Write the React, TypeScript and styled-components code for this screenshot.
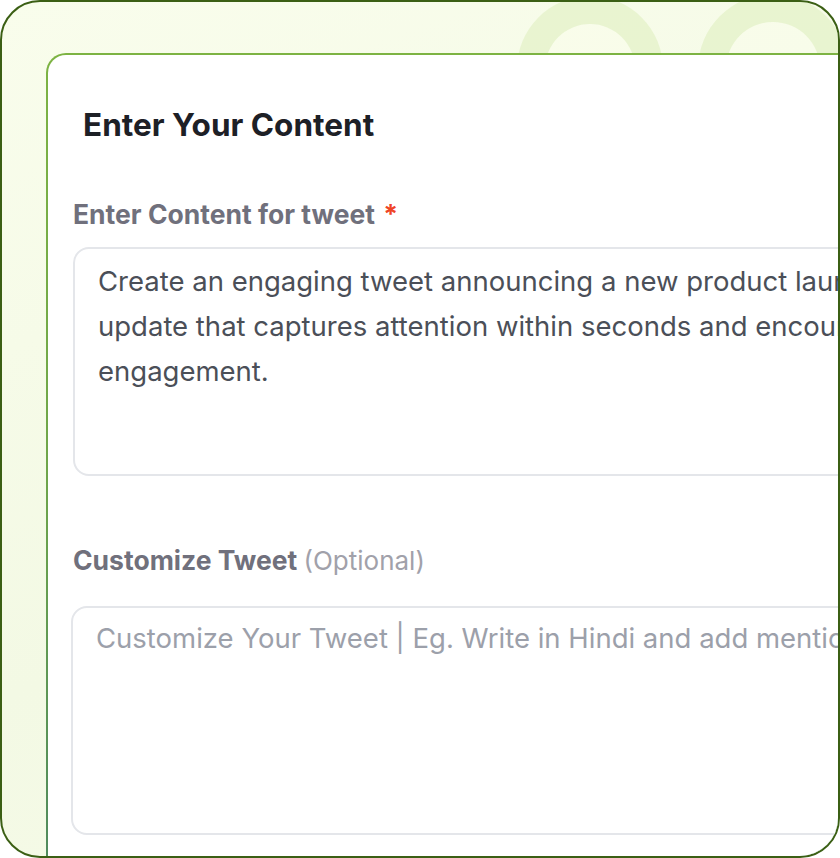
import React from 'react';
import styled, {createGlobalStyle} from 'styled-components';

const GlobalStyle = createGlobalStyle`
  * {
    box-sizing: border-box;
  }
  body {
    margin: 0;
    font-family: Inter, 'Noto Sans', sans-serif;
    background: #ffffff;
  }
`;

const Frame = styled.div`
  position: relative;
  width: 840px;
  height: 858px;
  border: 2px solid #3b5f14;
  border-radius: 40px;
  overflow: hidden;
  background: linear-gradient(160deg, #f9fdec 0%, #f3f9e4 60%, #f6fbe9 100%);
  padding: 51px 0 0 44px;
`;

const Ring = styled.div<{$left: number; $size: number}>`
  position: absolute;
  top: ${(p) => 69 - p.$size / 2 - 2}px;
  left: ${(p) => p.$left}px;
  width: ${(p) => p.$size}px;
  height: ${(p) => p.$size}px;
  border-radius: 50%;
  border: 28px solid rgba(196, 224, 150, 0.3);
  background: rgba(255, 255, 240, 0.25);
`;

const CardEdge = styled.div`
  position: relative;
  width: 860px;
  min-height: 820px;
  padding: 2px 0 0 2px;
  border-radius: 20px 0 0 0;
  background: linear-gradient(180deg, #7db343 0%, #6fa64a 50%, #4f8a5e 100%);
`;

const Card = styled.div`
  background: #ffffff;
  min-height: 818px;
  border-radius: 18px 0 0 0;
  padding: 53px 0 0 25px;
  display: flex;
  flex-direction: column;
`;

const Title = styled.h2`
  margin: 0 0 0 10px;
  font-size: 31.5px;
  line-height: 34px;
  font-weight: 700;
  color: #1d2026;
  white-space: nowrap;
`;

const Label = styled.div<{$gap: number}>`
  margin-top: ${(p) => p.$gap}px;
  font-size: 26.5px;
  line-height: 30px;
  font-weight: 700;
  color: #70707c;
  white-space: nowrap;
`;

const Required = styled.span`
  margin-left: 2px;
  color: #ef4426;
`;

const Hint = styled.span`
  font-weight: 400;
  font-size: 26px;
  color: #a1a1aa;
`;

const TextBox = styled.div<{$gap: number; $shift?: number; $padTop?: number}>`
  margin-top: ${(p) => p.$gap}px;
  margin-left: ${(p) => p.$shift || 0}px;
  width: 800px;
  height: 229px;
  border: 2px solid #e4e6ea;
  border-radius: 16px;
  padding: ${(p) => p.$padTop ?? 10}px 0 0 23px;
  font-size: 27.5px;
  line-height: 45px;
  color: #4b4f58;
  overflow: hidden;
`;

const Line = styled.div`
  white-space: nowrap;
`;

const Placeholder = styled.div`
  color: #9ca0aa;
  white-space: nowrap;
`;

const App = () => {
  return (
    <>
      <GlobalStyle />
      <Frame>
        <Ring $left={515} $size={146} />
        <Ring $left={696} $size={150} />
        <CardEdge>
          <Card>
            <Title>Enter Your Content</Title>
            <Label $gap={57}>
              Enter Content for tweet<Required> *</Required>
            </Label>
            <TextBox $gap={18}>
              <Line>Create an engaging tweet announcing a new product launch or</Line>
              <Line>update that captures attention within seconds and encourages</Line>
              <Line>engagement.</Line>
            </TextBox>
            <Label $gap={69}>
              Customize Tweet <Hint>(Optional)</Hint>
            </Label>
            <TextBox $gap={30} $shift={-2} $padTop={8}>
              <Placeholder>
                Customize Your Tweet | Eg. Write in Hindi and add mentions
              </Placeholder>
            </TextBox>
          </Card>
        </CardEdge>
      </Frame>
    </>
  );
};

export default App;
